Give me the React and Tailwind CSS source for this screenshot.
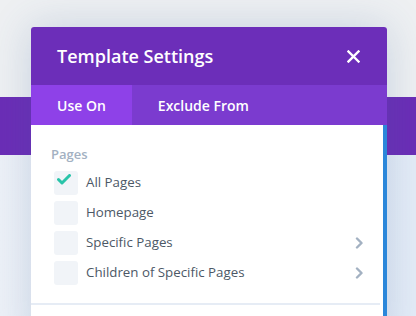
import React from 'react';

const font = { fontFamily: '"Open Sans", "Noto Sans", sans-serif' };

function Check() {
  return (
    <svg width="14" height="11" viewBox="0 0 14 11" className="ml-[3px] mt-[3px]">
      <path d="M1.5 5.5 L5 9 L12.5 1.5" fill="none" stroke="#29c4a9" strokeWidth="3" strokeLinecap="round" strokeLinejoin="round" />
    </svg>
  );
}

function Chevron() {
  return (
    <svg width="8" height="12" viewBox="0 0 8 12">
      <path d="M2 1.5 L6.5 6 L2 10.5" fill="none" stroke="#a3b1c2" strokeWidth="2.4" strokeLinecap="round" strokeLinejoin="round" />
    </svg>
  );
}

const rows = [
  { label: 'All Pages', checked: true },
  { label: 'Homepage' },
  { label: 'Specific Pages', more: true },
  { label: 'Children of Specific Pages', more: true },
];

export default function App() {
  return (
    <div className="relative h-[316px] w-[416px] overflow-hidden bg-[#eaeff6]" style={font}>
      {/* page behind the modal */}
      <div className="h-[97px] bg-[#eef0f2]" />
      <div className="h-[58px] bg-[#6b2db6]" />
      <div className="h-[161px] bg-gradient-to-r from-[#edf1f7] to-[#e4ecf7]" />

      {/* modal */}
      <div className="absolute left-[31px] top-[27px] w-[356px] h-[320px] rounded-t-[3px] overflow-hidden bg-white shadow-[0_0_40px_rgba(60,100,160,0.22)]">
        <div className="h-[58px] bg-[#6c2eb9] flex items-center justify-between pl-[26px] pr-[27px]">
          <span className="text-white text-[18px] font-semibold">Template Settings</span>
          <svg width="13" height="13" viewBox="0 0 13 13">
            <path d="M1.5 1.5 L11.5 11.5 M11.5 1.5 L1.5 11.5" stroke="white" strokeWidth="2.4" strokeLinecap="square" />
          </svg>
        </div>
        <div className="h-[40px] bg-[#7b3bcf] flex text-white text-[14px] font-semibold">
          <div className="bg-[#8e41e8] px-[26px] flex items-center">Use On</div>
          <div className="px-[26px] flex items-center">Exclude From</div>
        </div>
        <div className="flex h-[222px]">
          <div className="flex-1 flex flex-col">
            <div className="pl-[20px] pr-[20px] pt-[20px]">
              <div className="text-[13px] text-[#a3b1c2] font-semibold leading-[18px]">Pages</div>
              <div className="mt-[8px] flex flex-col gap-[6px] pl-[3px]">
                {rows.map((r) => (
                  <div key={r.label} className="flex items-center h-[24px]">
                    <div className="w-[24px] h-[24px] rounded-[3px] bg-[#f1f4f8] flex items-start">
                      {r.checked && <Check />}
                    </div>
                    <span className="ml-[8px] flex-1 text-[13.3px] text-[#4c5866]">{r.label}</span>
                    {r.more && <Chevron />}
                  </div>
                ))}
              </div>
            </div>
            <div className="h-[2px] bg-[#e6ecf5] mt-[18px] mr-[3px]" />
          </div>
          <div className="w-[4px] bg-[#2b87da]" />
        </div>
      </div>
    </div>
  );
}
